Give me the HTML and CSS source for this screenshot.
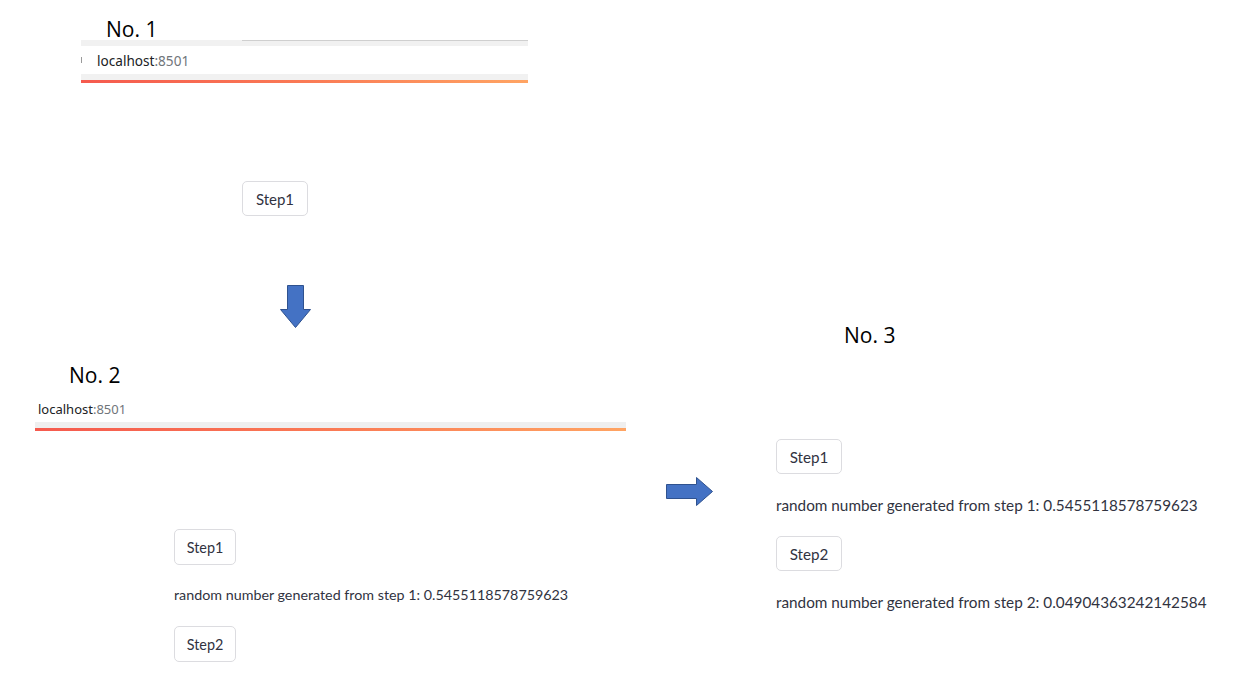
FILE: index.html
```html
<!DOCTYPE html>
<html>
<head>
<meta charset="utf-8">
<link rel="stylesheet" href="styles.css">
</head>
<body>
<div class="canvas">
  <div class="label label-1">No. 1</div>
  <div class="panel panel-1">
    <div class="band band-top"><div class="tab-line"></div></div>
    <div class="address"><span class="caret"></span><span class="host">localhost</span><span class="port">:8501</span></div>
    <div class="band"></div>
    <div class="decoration"></div>
    <div class="app app-1">
      <button class="st-btn">Step1</button>
    </div>
  </div>

  <svg class="arrow arrow-down" width="32" height="44" viewBox="0 0 32 44">
    <path d="M7.5 0.5 H23.5 V24.5 H30.5 L15.5 42.5 L0.5 24.5 H7.5 Z" fill="#4472c4" stroke="#2f528f" stroke-width="1"/>
  </svg>

  <div class="label label-2">No. 2</div>
  <div class="panel panel-2">
    <div class="address address-2"><span class="host">localhost</span><span class="port">:8501</span></div>
    <div class="band band-2"></div>
    <div class="decoration"></div>
    <div class="app app-2">
      <button class="st-btn">Step1</button>
      <p class="st-text">random number generated from step 1: 0.5455118578759623</p>
      <button class="st-btn">Step2</button>
    </div>
  </div>

  <svg class="arrow arrow-right" width="48" height="30" viewBox="0 0 48 30">
    <path d="M0.5 7.5 H30.5 V0.5 L46.5 14.5 L30.5 28.5 V21.5 H0.5 Z" fill="#4472c4" stroke="#2f528f" stroke-width="1"/>
  </svg>

  <div class="label label-3">No. 3</div>
  <div class="panel panel-3">
    <div class="app app-3">
      <button class="st-btn">Step1</button>
      <p class="st-text">random number generated from step 1: 0.5455118578759623</p>
      <button class="st-btn">Step2</button>
      <p class="st-text">random number generated from step 2: 0.04904363242142584</p>
    </div>
  </div>
</div>
</body>
</html>
```

FILE: styles.css
```css
html, body {
  margin: 0;
  padding: 0;
  background: #ffffff;
}

.canvas {
  position: relative;
  width: 1249px;
  height: 685px;
  overflow: hidden;
  font-family: "Liberation Sans", Arial, sans-serif;
}

.label {
  position: absolute;
  font-family: "Open Sans", "Noto Sans", sans-serif;
  font-size: 21px;
  line-height: 28px;
  color: #000000;
}
.label-1 { left: 106px; top: 15px; }
.label-2 { left: 69px; top: 361px; }
.label-3 { left: 844px; top: 321px; }

.panel {
  position: absolute;
}
.panel-1 { left: 81px; top: 40px; width: 447px; }
.panel-2 { left: 35px; top: 396px; width: 591px; }
.panel-3 { left: 776px; top: 439px; width: 460px; }

.band {
  height: 6px;
  background: #f1f1f1;
}
.band-top {
  position: relative;
}
.tab-line {
  margin-left: 161px;
  height: 1px;
  background: #cfcfcf;
}
.band-2 {
  height: 6px;
  background: #efefef;
}

.address {
  height: 28px;
  display: flex;
  align-items: center;
  font-family: "Noto Sans", "Open Sans", sans-serif;
  font-size: 13.6px;
  color: #202124;
}
.address-2 {
  height: 26px;
  padding-left: 3px;
  font-size: 13px;
}
.panel-1 .address {
  padding-left: 16px;
  position: relative;
}
.caret {
  position: absolute;
  left: 0;
  top: 11px;
  width: 1px;
  height: 6px;
  background: #9a9a9a;
}
.port {
  color: #70757a;
}

.decoration {
  height: 3px;
  background: linear-gradient(90deg, #f55a4e 0%, #fa7a55 50%, #ffa463 100%);
}

.app {
  display: flex;
  flex-direction: column;
  align-items: flex-start;
  font-family: "Lato", "Source Sans Pro", sans-serif;
  color: #31333f;
}
.app-1 {
  padding-top: 98px;
  padding-left: 161px;
}
.app-2 {
  padding-top: 98px;
  padding-left: 139px;
}
.app-3 {
  font-size: 15px;
}

.st-btn {
  font-family: "Lato", "Source Sans Pro", sans-serif;
  font-size: 14.4px;
  color: #31333f;
  background: #ffffff;
  border: 1px solid #dcdce0;
  border-radius: 5px;
  height: 36px;
  padding: 0;
  cursor: pointer;
}
.app-1 .st-btn { width: 66px; height: 35px; font-size: 15px; }
.app-2 .st-btn { width: 62px; }
.app-3 .st-btn { width: 66px; height: 35px; font-size: 15.2px; }

.st-text {
  margin: 0;
  font-size: 14.3px;
  line-height: 20px;
  padding: 20px 0 21px;
}
.app-3 .st-text {
  font-size: 15.3px;
  padding: 21px 0 21px;
}

.arrow {
  position: absolute;
}
.arrow-down { left: 280px; top: 285px; }
.arrow-right { left: 666px; top: 477px; }
```
